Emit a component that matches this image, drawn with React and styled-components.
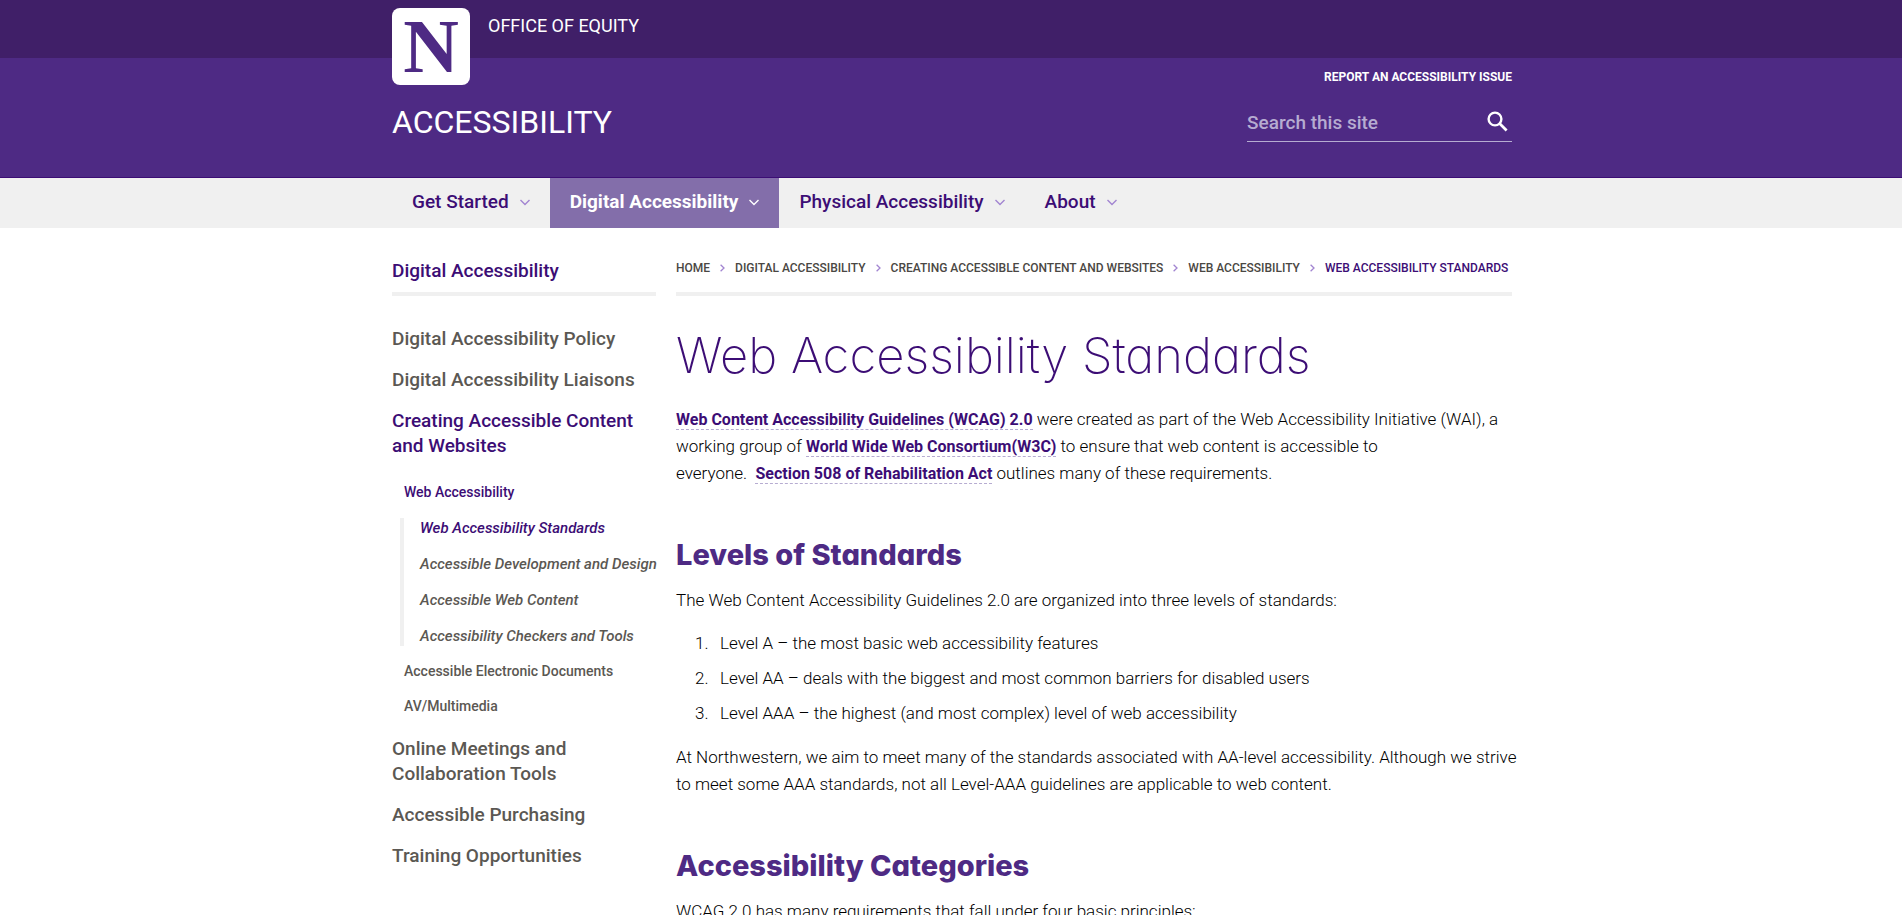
import React from "react";
import styled, { createGlobalStyle, css } from "styled-components";

const purple = "#4e2a84";
const deepPurple = "#401f68";
const ink = "#3c0d75";
const lilac = "#a285d1";
const rule = "#f0f0f0";

const GlobalStyle = createGlobalStyle`
  *, *::before, *::after { box-sizing: border-box; }
  body {
    margin: 0;
    background: #fff;
    color: #000;
    font-family: Roboto, "Liberation Sans", sans-serif;
    font-size: 17px;
    font-weight: 300;
    line-height: 27px;
  }
  a { color: inherit; text-decoration: none; }
  ul, ol { margin: 0; padding: 0; list-style: none; }
`;

const Container = styled.div`
  max-width: 1122px;
  margin: 0 auto;
  padding-left: 2px;
`;

const TopBar = styled.div`
  height: 58px;
  background: ${deepPurple};
  color: #fff;
`;

const TopRow = styled(Container)`
  display: flex;
  align-items: flex-start;
  gap: 18px;
  padding-top: 8px;
`;

const Logo = styled.a`
  display: flex;
  align-items: center;
  justify-content: center;
  flex: none;
  width: 78px;
  height: 77px;
  border-radius: 8px;
  background: #fff;
  color: ${purple};
  font: 700 77px/77px "Liberation Serif", serif;
`;

const OfficeLink = styled.a`
  padding-top: 4px;
  font-size: 18px;
  font-weight: 400;
`;

const Masthead = styled.header`
  background: ${purple};
  border-bottom: 1px solid ${ink};
  color: #fff;
`;

const MastheadRow = styled(Container)`
  display: flex;
  justify-content: space-between;
  height: 119px;
`;

const SiteName = styled.a`
  align-self: flex-start;
  padding-top: 44px;
  font-size: 32px;
  font-weight: 400;
  line-height: 40px;
`;

const Tools = styled.div`
  display: flex;
  flex-direction: column;
  width: 265px;
  padding-top: 9px;
`;

const ReportLink = styled.a`
  align-self: flex-end;
  font-size: 12px;
  font-weight: 700;
  line-height: 20px;
  white-space: nowrap;
`;

const SearchForm = styled.form`
  display: flex;
  align-items: center;
  height: 40px;
  margin-top: 15px;
  padding-right: 4px;
  border-bottom: 1px solid #b6acd1;
`;

const SearchInput = styled.input`
  flex: 1;
  min-width: 0;
  padding: 2px 0 0;
  border: 0;
  outline: 0;
  background: transparent;
  color: #fff;
  font: 500 19px/24px Roboto, "Liberation Sans", sans-serif;
  &::placeholder { color: #b6acd1; opacity: 1; }
`;

const SearchButton = styled.button`
  display: flex;
  padding: 0;
  border: 0;
  background: none;
  color: #fff;
`;

const NavBar = styled.nav`
  background: ${rule};
`;

const NavList = styled(Container).attrs({ as: "ul" })`
  && {
    display: flex;
    margin: 0 auto;
    padding-left: 2px;
  }
`;

const NavLink = styled.a`
  display: flex;
  align-items: center;
  gap: 11px;
  height: 50px;
  padding: 0 20px 3px;
  color: ${ink};
  font-size: 19px;
  font-weight: 500;
  svg { margin-top: 2px; color: ${lilac}; }
  ${(p) => p.$active && css`
    background: #836eaa;
    color: #fff;
    font-weight: 700;
    svg { color: #fff; }
  `}
`;

const Columns = styled(Container)`
  display: grid;
  grid-template-columns: 264px minmax(0, 1fr);
  column-gap: 20px;
  padding-top: 24px;
  padding-bottom: 40px;
`;

const SideTitle = styled.a`
  display: block;
  height: 44px;
  padding-top: 6px;
  border-bottom: 4px solid ${rule};
  color: ${ink};
  font-size: 19px;
  font-weight: 500;
  line-height: 26px;
`;

const SideList = styled.ul`
  display: flex;
  flex-direction: column;
  gap: 16px;
  padding-top: 30px;
  font-size: 19px;
  font-weight: 500;
  line-height: 25px;
`;

const SubList = styled.ul`
  display: flex;
  flex-direction: column;
  gap: 15px;
  margin-top: 24px;
  padding: 0 0 4px 12px;
  font-size: 14px;
  line-height: 20px;
`;

const LeafList = styled(SubList)`
  gap: 16px;
  margin: 16px 0 0 -4px;
  padding: 0 0 0 16px;
  border-left: 4px solid ${rule};
  font-size: 15px;
  font-style: italic;
  white-space: nowrap;
`;

const SideLink = styled.a`
  display: block;
  color: ${(p) => (p.$active ? ink : "#5b5853")};
`;

const Crumbs = styled.ol`
  display: flex;
  align-items: center;
  height: 44px;
  padding-bottom: 8px;
  border-bottom: 4px solid ${rule};
  color: #4a4743;
  font-size: 12px;
  font-weight: 500;
  text-transform: uppercase;
  white-space: nowrap;
`;

const Crumb = styled.li`
  display: flex;
  align-items: center;
  color: ${(p) => (p.$current ? ink : "inherit")};
  svg { margin: 0 10px; color: ${lilac}; }
`;

const Title = styled.h1`
  margin: 32px 0 22px;
  color: ${ink};
  font: 200 49px/56px Inter, sans-serif;
  font-feature-settings: "cv11";
`;

const Heading = styled.h2`
  margin: 50px 0 14px;
  color: ${purple};
  font: 800 29px/36px Inter, sans-serif;
  font-feature-settings: "cv11";
`;

const Text = styled.p`
  margin: 0 -10px 16px 0;
`;

const TextLink = styled.a`
  border-bottom: 1px dashed #b6acd1;
  color: ${ink};
  font-size: 16px;
  font-weight: 700;
`;

const Levels = styled.ol`
  display: flex;
  flex-direction: column;
  gap: 8px;
  margin: 0 0 17px;
  padding-left: 19px;
  counter-reset: level;
`;

const Level = styled.li`
  display: flex;
  counter-increment: level;
  &::before {
    content: counter(level) ".";
    flex: none;
    width: 25px;
  }
`;

const ChevronDown = () => (
  <svg width="10" height="7" viewBox="0 0 10 7" fill="none" stroke="currentColor" strokeWidth="1.4" aria-hidden="true">
    <path d="M.5 1 5 5.5 9.5 1" />
  </svg>
);

const ChevronRight = () => (
  <svg width="5" height="8" viewBox="0 0 5 8" fill="none" stroke="currentColor" strokeWidth="1.3" aria-hidden="true">
    <path d="M.6.8 4 4 .6 7.2" />
  </svg>
);

const SearchIcon = () => (
  <svg width="21" height="21" viewBox="0 0 21 21" fill="none" stroke="currentColor" aria-hidden="true">
    <circle cx="8" cy="8" r="6.4" strokeWidth="2.4" />
    <path d="m12.6 12.6 7 7" strokeWidth="2.8" />
  </svg>
);

const navItems = ["Get Started", "Digital Accessibility", "Physical Accessibility", "About"];

const crumbs = [
  "Home",
  "Digital Accessibility",
  "Creating Accessible Content and Websites",
  "Web Accessibility",
  "Web Accessibility Standards",
];

const leaves = [
  "Web Accessibility Standards",
  "Accessible Development and Design",
  "Accessible Web Content",
  "Accessibility Checkers and Tools",
];

export default function App() {
  return (
    <>
      <GlobalStyle />
      <TopBar>
        <TopRow>
          <Logo href="#" aria-label="Northwestern University">N</Logo>
          <OfficeLink href="#">OFFICE OF EQUITY</OfficeLink>
        </TopRow>
      </TopBar>
      <Masthead>
        <MastheadRow>
          <SiteName href="#">ACCESSIBILITY</SiteName>
          <Tools>
            <ReportLink href="#">REPORT AN ACCESSIBILITY ISSUE</ReportLink>
            <SearchForm role="search">
              <SearchInput type="search" aria-label="Search this site" placeholder="Search this site" />
              <SearchButton type="button" aria-label="Search"><SearchIcon /></SearchButton>
            </SearchForm>
          </Tools>
        </MastheadRow>
      </Masthead>
      <NavBar aria-label="Main">
        <NavList>
          {navItems.map((label, i) => (
            <li key={label}>
              <NavLink href="#" $active={i === 1}>{label}<ChevronDown /></NavLink>
            </li>
          ))}
        </NavList>
      </NavBar>
      <Columns>
        <aside>
          <SideTitle href="#">Digital Accessibility</SideTitle>
          <SideList>
            <li><SideLink href="#">Digital Accessibility Policy</SideLink></li>
            <li><SideLink href="#">Digital Accessibility Liaisons</SideLink></li>
            <li>
              <SideLink href="#" $active>Creating Accessible Content and Websites</SideLink>
              <SubList>
                <li>
                  <SideLink href="#" $active>Web Accessibility</SideLink>
                  <LeafList>
                    {leaves.map((label, i) => (
                      <li key={label}><SideLink href="#" $active={i === 0}>{label}</SideLink></li>
                    ))}
                  </LeafList>
                </li>
                <li><SideLink href="#">Accessible Electronic Documents</SideLink></li>
                <li><SideLink href="#">AV/Multimedia</SideLink></li>
              </SubList>
            </li>
            <li><SideLink href="#">Online Meetings and Collaboration Tools</SideLink></li>
            <li><SideLink href="#">Accessible Purchasing</SideLink></li>
            <li><SideLink href="#">Training Opportunities</SideLink></li>
          </SideList>
        </aside>
        <main>
          <nav aria-label="Breadcrumb">
            <Crumbs>
              {crumbs.map((label, i) => {
                const current = i === crumbs.length - 1;
                return (
                  <Crumb key={label} $current={current}>
                    <a href="#">{label}</a>
                    {!current && <ChevronRight />}
                  </Crumb>
                );
              })}
            </Crumbs>
          </nav>
          <Title>Web Accessibility Standards</Title>
          <Text>
            <TextLink href="#">Web Content Accessibility Guidelines (WCAG) 2.0</TextLink> were created as part of the
            Web Accessibility Initiative (WAI), a working group of{" "}
            <TextLink href="#">World Wide Web Consortium(W3C)</TextLink> to ensure that web content is accessible to
            <br />
            everyone.&nbsp;&nbsp;<TextLink href="#">Section 508 of Rehabilitation Act</TextLink> outlines many of
            these requirements.
          </Text>
          <Heading>Levels of Standards</Heading>
          <Text>The Web Content Accessibility Guidelines 2.0 are organized into three levels of standards:</Text>
          <Levels>
            <Level>Level A – the most basic web accessibility features</Level>
            <Level>Level AA – deals with the biggest and most common barriers for disabled users</Level>
            <Level>Level AAA – the highest (and most complex) level of web accessibility</Level>
          </Levels>
          <Text>
            At Northwestern, we aim to meet many of the standards associated with AA-level accessibility. Although we
            strive to meet some AAA standards, not all Level-AAA guidelines are applicable to web content.
          </Text>
          <Heading>Accessibility Categories</Heading>
          <Text>WCAG 2.0 has many requirements that fall under four basic principles:</Text>
        </main>
      </Columns>
    </>
  );
}
